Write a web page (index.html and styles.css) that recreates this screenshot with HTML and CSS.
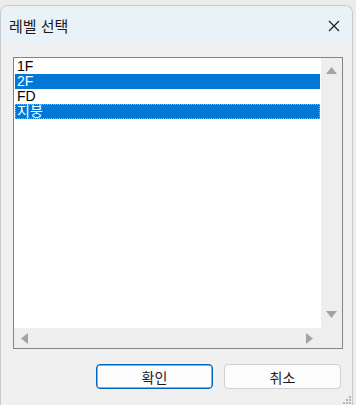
FILE: index.html
```html
<!DOCTYPE html>
<html lang="ko">
<head>
    <meta charset="UTF-8">
    <title>레벨 선택</title>
    <link rel="stylesheet" href="styles.css">
</head>
<body>
    <div class="window">
        <div class="titlebar">
            <span class="title">레벨 선택</span>
            <svg class="close" width="12" height="12" viewBox="0 0 12 12">
                <path d="M1 1 L11 11 M11 1 L1 11" stroke="#1a1a1a" stroke-width="1.1" fill="none"/>
            </svg>
        </div>
        <div class="content">
            <div class="listbox">
                <ul class="items">
                    <li>1F</li>
                    <li class="selected">2F</li>
                    <li>FD</li>
                    <li class="selected focused">지붕</li>
                </ul>
                <div class="vscroll">
                    <svg width="11" height="7" viewBox="0 0 11 7"><path d="M5.5 0 L11 7 L0 7 Z" fill="#a3a3a3"/></svg>
                    <svg width="11" height="7" viewBox="0 0 11 7"><path d="M0 0 L11 0 L5.5 7 Z" fill="#a3a3a3"/></svg>
                </div>
                <div class="hscroll">
                    <svg width="7" height="11" viewBox="0 0 7 11"><path d="M7 0 L7 11 L0 5.5 Z" fill="#a3a3a3"/></svg>
                    <svg width="7" height="11" viewBox="0 0 7 11"><path d="M0 0 L7 5.5 L0 11 Z" fill="#a3a3a3"/></svg>
                </div>
                <div class="corner"></div>
            </div>
            <div class="buttons">
                <button class="btn default">확인</button>
                <button class="btn">취소</button>
            </div>
        </div>
        <svg class="grip" width="8" height="8" viewBox="0 0 8 8">
            <rect x="6" y="0" width="2" height="2" fill="#b5b5b5"/>
            <rect x="3" y="3" width="2" height="2" fill="#b5b5b5"/>
            <rect x="6" y="3" width="2" height="2" fill="#b5b5b5"/>
            <rect x="0" y="6" width="2" height="2" fill="#b5b5b5"/>
            <rect x="3" y="6" width="2" height="2" fill="#b5b5b5"/>
            <rect x="6" y="6" width="2" height="2" fill="#b5b5b5"/>
        </svg>
    </div>
</body>
</html>
```

FILE: styles.css
```css
body {
    margin: 0;
    padding: 0;
    background-color: #ececec;
    font-family: "Liberation Sans", "Noto Sans CJK KR", sans-serif;
}
.window {
    position: relative;
    margin-top: 5px;
    width: 353px;
    height: 400px;
    box-sizing: border-box;
    border: 1px solid #c9c9c9;
    border-bottom: none;
    border-radius: 8px 8px 0 0;
    background-color: #f0f0f0;
    overflow: hidden;
}
.titlebar {
    height: 37px;
    background-color: #e9f2f7;
    display: flex;
    align-items: center;
    justify-content: space-between;
    padding: 0 12px 0 8px;
}
.title {
    font-family: "Noto Sans CJK KR", sans-serif;
    font-size: 15px;
    color: #1a1a1a;
    margin-top: 1px;
}
.close {
    margin-top: 2px;
}
.content {
    padding: 14px 0 0 12px;
}
.listbox {
    width: 330px;
    height: 292px;
    box-sizing: border-box;
    border: 1px solid #848484;
    background-color: #fff;
    display: grid;
    grid-template-columns: 1fr 21px;
    grid-template-rows: 1fr 20px;
}
.items {
    list-style: none;
    margin: 0;
    padding: 1px;
    font-size: 14px;
}
.items li {
    height: 15px;
    line-height: 15px;
    padding-left: 2px;
    color: #000;
    box-sizing: border-box;
}
.items li.selected {
    background-color: #0078d7;
    color: #fff;
}
.items li.focused {
    border: 1px dotted #e9a24a;
    padding-left: 1px;
    line-height: 13px;
}
.vscroll {
    background-color: #eeeeee;
    display: flex;
    flex-direction: column;
    justify-content: space-between;
    align-items: center;
    padding: 9px 0 10px;
}
.hscroll {
    background-color: #eeeeee;
    display: flex;
    justify-content: space-between;
    align-items: center;
    padding: 0 8px 0 7px;
}
.corner {
    background-color: #eeeeee;
}
.buttons {
    display: flex;
    justify-content: flex-end;
    gap: 11px;
    margin-top: 15px;
    padding-right: 11px;
}
.btn {
    width: 117px;
    height: 25px;
    box-sizing: border-box;
    background-color: #fdfdfd;
    border: 1px solid #d0d0d0;
    border-radius: 4px;
    font-family: "Noto Sans CJK KR", sans-serif;
    font-size: 14px;
    color: #1a1a1a;
    padding: 0;
}
.btn.default {
    border: 1px solid #0067c0;
    box-shadow: inset 0 0 0 0.5px #0067c0;
}
.grip {
    position: absolute;
    right: 1px;
    bottom: 1px;
}
```
